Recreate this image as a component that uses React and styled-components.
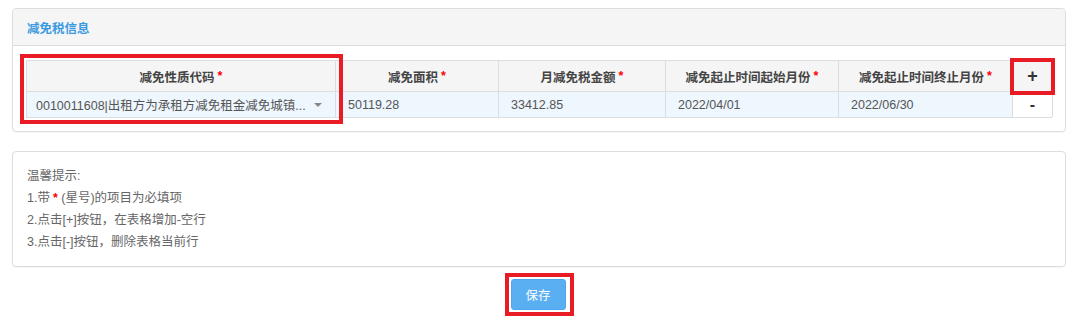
import React from "react";
import styled, { createGlobalStyle } from "styled-components";

const GlobalStyle = createGlobalStyle`
  body {
    margin: 0;
    background: #fff;
    font-family: "Liberation Sans", Arial, "Noto Sans CJK SC", sans-serif;
    font-size: 12.5px;
    color: #555;
  }
`;

const Page = styled.div`
  padding: 8px 14px 0 12px;
  display: flex;
  flex-direction: column;
  gap: 19px;
`;

const Panel = styled.div`
  border: 1px solid #ddd;
  border-radius: 4px;
  background: #fff;
  box-shadow: 0 1px 1px rgba(0, 0, 0, 0.04);
`;

const PanelHead = styled.div`
  height: 36px;
  display: flex;
  align-items: center;
  padding-left: 14px;
  background: #f5f5f5;
  border-bottom: 1px solid #ddd;
  border-radius: 4px 4px 0 0;
`;

const PanelTitle = styled.h3`
  margin: 0;
  font-size: 12.5px;
  font-weight: bold;
  color: #3c9be0;
`;

const PanelBody = styled.div`
  padding: ${(p) => p.$pad || "14px 13px 13px 13px"};
`;

const Table = styled.div`
  display: flex;
  border: 1px solid #ddd;
  border-right: 0;
`;

const Column = styled.div`
  display: flex;
  flex-direction: column;
  width: ${(p) => p.$w}px;
  flex: none;
  border-right: 1px solid #ddd;
  box-sizing: border-box;
  ${(p) => p.$marked && "outline: 4px solid #e81c24; outline-offset: 3px; position: relative; z-index: 1;"}
`;

const HeadCell = styled.div`
  height: 30px;
  display: flex;
  align-items: center;
  justify-content: center;
  background: #f5f5f5;
  border-bottom: 1px solid #ddd;
  font-weight: bold;
  color: #444;
  ${(p) => p.$marked && "outline: 4px solid #e81c24; outline-offset: -1px; position: relative; z-index: 1;"}
`;

const Star = styled.span`
  color: #f00;
  margin-left: 3px;
  font-weight: bold;
`;

const DataCell = styled.div`
  height: 25px;
  display: flex;
  align-items: center;
  padding: 0 ${(p) => p.$pad ?? 12}px;
  justify-content: ${(p) => (p.$center ? "center" : "flex-start")};
  background: ${(p) => (p.$plain ? "#fff" : "#eef6fe")};
  color: #555;
  white-space: nowrap;
  overflow: hidden;
`;

const SelectText = styled.span`
  flex: 1;
  overflow: hidden;
  white-space: nowrap;
`;

const Caret = styled.span`
  width: 0;
  height: 0;
  margin: 0 4px 0 8px;
  border-left: 4px solid transparent;
  border-right: 4px solid transparent;
  border-top: 4px solid #888;
`;

const OpButton = styled.span`
  font-size: ${(p) => p.$size || 18}px;
  font-weight: bold;
  color: #333;
  line-height: 1;
`;

const Tips = styled.div`
  display: flex;
  flex-direction: column;
  line-height: 22px;
  color: #666;
`;

const Footer = styled.div`
  display: flex;
  justify-content: center;
  margin-top: -7px;
`;

const SaveMark = styled.div`
  padding: 2px 4px 2px 2px;
  border: 4px solid #e81c24;
  display: flex;
  margin-top: -6px;
`;

const SaveButton = styled.button`
  width: 55px;
  height: 31px;
  border: 1px solid #4ea6ee;
  border-radius: 3px;
  background: #5aaef2;
  color: #fff;
  font-family: inherit;
  font-size: 12.5px;
`;

const columns = [
  { title: "减免性质代码", w: 309, marked: true },
  { title: "减免面积", w: 163, value: "50119.28" },
  { title: "月减免税金额", w: 167, value: "33412.85" },
  { title: "减免起止时间起始月份", w: 173, value: "2022/04/01" },
  { title: "减免起止时间终止月份", w: 174, value: "2022/06/30" },
];

export default function App() {
  return (
    <>
      <GlobalStyle />
      <Page>
        <Panel>
          <PanelHead>
            <PanelTitle>减免税信息</PanelTitle>
          </PanelHead>
          <PanelBody>
            <Table>
              {columns.map((c, i) => (
                <Column key={i} $w={c.w} $marked={c.marked}>
                  <HeadCell>
                    {c.title}
                    <Star>*</Star>
                  </HeadCell>
                  {i === 0 ? (
                    <DataCell $pad={9}>
                      <SelectText>0010011608|出租方为承租方减免租金减免城镇...</SelectText>
                      <Caret />
                    </DataCell>
                  ) : (
                    <DataCell>{c.value}</DataCell>
                  )}
                </Column>
              ))}
              <Column $w={40}>
                <HeadCell $marked>
                  <OpButton>+</OpButton>
                </HeadCell>
                <DataCell $plain $center $pad={0}>
                  <OpButton $size={16}>-</OpButton>
                </DataCell>
              </Column>
            </Table>
          </PanelBody>
        </Panel>
        <Panel>
          <PanelBody $pad="13px 14px 13px 14px">
            <Tips>
              <span>温馨提示:</span>
              <span>
                1.带<Star as="b">*</Star> (星号)的项目为必填项
              </span>
              <span>2.点击[+]按钮，在表格增加-空行</span>
              <span>3.点击[-]按钮，删除表格当前行</span>
            </Tips>
          </PanelBody>
        </Panel>
        <Footer>
          <SaveMark>
            <SaveButton>保存</SaveButton>
          </SaveMark>
        </Footer>
      </Page>
    </>
  );
}
